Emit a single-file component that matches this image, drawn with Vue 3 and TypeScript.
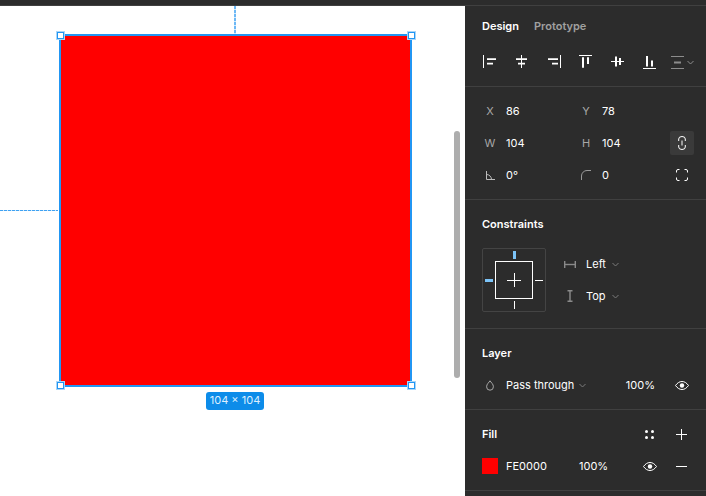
<script setup lang="ts">
// each icon is one filled path on a 14x14 box
const aligns = [
  "M0 0h1v13H0zM4 3.300h9v1.700H4zM4 7.700h6v1.700H4z",
  "M6 0h1v13H6zM1 3.300h11v1.700H1zM3 7.700h7v1.700H3z",
  "M13 0h1v13h-1zM1 3.300h10v1.700H1zM5 7.700h6v1.700H5z",
  "M0 0h13v1H0zM3 2.300h2v10.400H3zM8 2.300h2V9H8z",
  "M0 6h13v1H0zM4 1.500h2v10H4zM8 3h2v7H8z",
  "M0 13h13v1H0zM3 1h2v10.500H3zM8 5.500h2v6H8z",
];
</script>

<template>
  <div class="app">
    <div class="topbar"></div>
    <div class="main">
      <div class="canvas">
        <div class="guide guide-v"></div>
        <div class="guide guide-h"></div>
        <div class="rect"></div>
        <span class="handle tl"></span>
        <span class="handle tr"></span>
        <span class="handle bl"></span>
        <span class="handle br"></span>
        <div class="size-tag">104 × 104</div>
        <div class="scrollbar"></div>
      </div>

      <aside class="panel">
        <section class="tabs-section">
          <div class="tabs">
            <span class="tab active">Design</span>
            <span class="tab">Prototype</span>
          </div>
          <div class="align-row">
            <svg v-for="d in aligns" :key="d" class="align-icon" width="14" height="14" viewBox="0 0 14 14">
              <path :d="d" fill="#fff" />
            </svg>
            <div class="distribute">
              <svg width="14" height="13" viewBox="0 0 14 13">
                <path d="M0 .5h13M0 12.500h13" stroke="#8c8c8c" fill="none" />
                <path d="M3 5.500h7v2H3z" fill="#8c8c8c" />
              </svg>
              <svg class="chev" width="7" height="5" viewBox="0 0 7 5">
                <path d="M.5 1l3 3 3-3" stroke="#8c8c8c" fill="none" />
              </svg>
            </div>
          </div>
        </section>

        <section class="geometry">
          <div class="geo-row">
            <span class="geo-label">X</span><span class="geo-value">86</span>
            <span class="geo-label">Y</span><span class="geo-value last">78</span>
            <span class="geo-end"></span>
          </div>
          <div class="geo-row">
            <span class="geo-label">W</span><span class="geo-value">104</span>
            <span class="geo-label">H</span><span class="geo-value last">104</span>
            <span class="geo-end link-box">
              <svg width="8" height="14" viewBox="0 0 8 14">
                <path d="M.7 5V3a3.300 2.500 0 0 1 6.600 0v2M.7 9v2a3.300 2.500 0 0 0 6.600 0V9M4 4.500v5" stroke="#fff" fill="none" />
              </svg>
            </span>
          </div>
          <div class="geo-row">
            <span class="geo-label">
              <svg width="9" height="9" viewBox="0 0 9 9">
                <path d="M.5 0v8.500H9M.5 3.500a5 5 0 0 1 5 5" stroke="#bdbdbd" fill="none" />
              </svg>
            </span>
            <span class="geo-value">0°</span>
            <span class="geo-label">
              <svg width="10" height="10" viewBox="0 0 10 10">
                <path d="M.5 10V6A5.500 5.500 0 0 1 6 .5h4" stroke="#9a9a9a" fill="none" />
              </svg>
            </span>
            <span class="geo-value last">0</span>
            <span class="geo-end">
              <svg width="12" height="12" viewBox="0 0 12 12">
                <path d="M.5 3.500V2A1.500 1.500 0 0 1 2 .5h1.500M8.500.5H10A1.500 1.500 0 0 1 11.500 2v1.500M11.500 8.500V10A1.500 1.500 0 0 1 10 11.500H8.500M3.500 11.500H2A1.500 1.500 0 0 1 .5 10V8.500" stroke="#fff" fill="none" />
              </svg>
            </span>
          </div>
        </section>

        <section class="constraints">
          <h3 class="title">Constraints</h3>
          <div class="constraint-body">
            <div class="cbox">
              <div class="cinner">
                <svg width="14" height="14" viewBox="0 0 14 14">
                  <path d="M7.500 0v14M0 7.500h14" stroke="#fff" fill="none" />
                </svg>
              </div>
              <i class="tick t"></i>
              <i class="tick l"></i>
              <i class="tick r"></i>
              <i class="tick b"></i>
            </div>
            <div class="constraint-rows">
              <div class="c-row">
                <svg class="c-icon" width="12" height="7" viewBox="0 0 12 7">
                  <path d="M.7 0v7M11.300 0v7" stroke="#8a8a8a" stroke-width="1.400" fill="none" />
                  <path d="M1 3.500h10" stroke="#8a8a8a" stroke-width="1.400" fill="none" />
                </svg>
                <span class="c-text">Left</span>
                <svg width="7" height="5" viewBox="0 0 7 5"><path d="M.5 1l3 3 3-3" stroke="#7a7a7a" fill="none" /></svg>
              </div>
              <div class="c-row">
                <svg class="c-icon" width="12" height="12" viewBox="0 0 12 12">
                  <path d="M3.500.7h5M3.500 11.300h5M6 1v10" stroke="#8a8a8a" stroke-width="1.400" fill="none" />
                </svg>
                <span class="c-text">Top</span>
                <svg width="7" height="5" viewBox="0 0 7 5"><path d="M.5 1l3 3 3-3" stroke="#7a7a7a" fill="none" /></svg>
              </div>
            </div>
          </div>
        </section>

        <section class="layer">
          <h3 class="title">Layer</h3>
          <div class="layer-row">
            <svg class="drop" width="8" height="11" viewBox="0 0 8 11">
              <path d="M4 .8C3 2.500.6 4 .6 6.800a3.400 3.400 0 0 0 6.800 0C7.400 4 5 2.500 4 .8z" stroke="#a8a8a8" fill="none" />
            </svg>
            <span class="blend">Pass through</span>
            <svg width="7" height="5" viewBox="0 0 7 5"><path d="M.5 1l3 3 3-3" stroke="#7a7a7a" fill="none" /></svg>
            <span class="opacity">100%</span>
            <svg width="14" height="9" viewBox="0 0 14 9">
              <path d="M.5 4.500C2.500 1.800 4.500.5 7 .5s4.500 1.300 6.500 4c-2 2.700-4 4-6.500 4s-4.500-1.300-6.500-4z" stroke="#fff" fill="none" />
              <circle cx="7" cy="4.500" r="2.200" fill="#fff" />
            </svg>
          </div>
        </section>

        <section class="fill">
          <div class="fill-head">
            <h3 class="title">Fill</h3>
            <svg class="dots" width="9" height="9" viewBox="0 0 9 9" fill="#fff">
              <circle cx="1.500" cy="1.500" r="1.500" /><circle cx="7.500" cy="1.500" r="1.500" />
              <circle cx="1.500" cy="7.500" r="1.500" /><circle cx="7.500" cy="7.500" r="1.500" />
            </svg>
            <svg width="11" height="11" viewBox="0 0 11 11"><path d="M5.500 0v11M0 5.500h11" stroke="#fff" fill="none" /></svg>
          </div>
          <div class="fill-row">
            <span class="swatch"></span>
            <span class="hex">FE0000</span>
            <span class="fill-op">100%</span>
            <svg class="fill-eye" width="14" height="9" viewBox="0 0 14 9">
              <path d="M.5 4.500C2.500 1.800 4.500.5 7 .5s4.500 1.300 6.500 4c-2 2.700-4 4-6.500 4s-4.500-1.300-6.500-4z" stroke="#fff" fill="none" />
              <circle cx="7" cy="4.500" r="2.200" fill="#fff" />
            </svg>
            <svg width="11" height="1" viewBox="0 0 11 1"><path d="M0 .5h11" stroke="#fff" fill="none" /></svg>
          </div>
        </section>
      </aside>
    </div>
  </div>
</template>

<style>
html,
body {
  margin: 0;
  overflow: hidden;
}
</style>

<style scoped>
.app {
  width: 706px;
  height: 496px;
  display: flex;
  flex-direction: column;
  font-family: Inter, "Liberation Sans", sans-serif;
  font-size: 11px;
  color: #fff;
  background: #2c2c2c;
  overflow: hidden;
}

.topbar {
  height: 5px;
  flex: none;
  background: #2c2c2c;
  border-bottom: 1px solid #404040;
}

.main {
  flex: 1;
  display: flex;
  min-height: 0;
}

.canvas {
  position: relative;
  width: 465px;
  flex: none;
  background: #fff;
}

.rect {
  position: absolute;
  left: 59px;
  top: 28px;
  width: 349px;
  height: 349px;
  background: #ff0000;
  border: 2px solid #2196f3;
}

.handle {
  position: absolute;
  width: 5px;
  height: 5px;
  background: #fff;
  border: 1px solid #2196f3;
  outline: 1px solid #a9d5f8;
}
.tl { left: 57px; top: 26px; }
.tr { left: 408px; top: 26px; }
.bl { left: 57px; top: 376px; }
.br { left: 408px; top: 376px; }

.guide {
  position: absolute;
}
.guide-v {
  left: 234px;
  top: 0;
  width: 2px;
  height: 28px;
  background: repeating-linear-gradient(to bottom, #6db8f5 0 3px, #d4ebfd 3px 4px);
}
.guide-h {
  left: 0;
  top: 204px;
  width: 58px;
  height: 1px;
  background: repeating-linear-gradient(to right, #3fa2f2 0 3px, #cfe8fc 3px 4px);
}

.size-tag {
  position: absolute;
  left: 206px;
  top: 386px;
  width: 58px;
  height: 18px;
  line-height: 17px;
  border-radius: 3px;
  background: #0d8ce9;
  color: #dcefff;
  font-size: 11px;
  text-align: center;
  white-space: nowrap;
}

.scrollbar {
  position: absolute;
  left: 454px;
  top: 125px;
  width: 6px;
  height: 247px;
  border-radius: 3px;
  background: #adadad;
}

.panel {
  flex: 1;
  display: flex;
  flex-direction: column;
  min-width: 0;
}

.panel > section {
  box-sizing: border-box;
  border-bottom: 1px solid #404040;
  flex: none;
}

.tabs-section {
  height: 81px;
  padding: 13px 17px 0;
}

.tabs {
  display: flex;
  gap: 15px;
  font-weight: 600;
  line-height: 14px;
}

.tab {
  color: #a0a0a0;
}
.tab.active {
  color: #fff;
}

.align-row {
  display: flex;
  align-items: center;
  margin-top: 22px;
  padding-left: 1px;
  gap: 18px;
}

.align-icon {
  flex: none;
}

.distribute {
  display: flex;
  align-items: center;
  gap: 2px;
  margin-left: -4px;
}

.geometry {
  height: 113px;
  padding: 8px 12px 0 17px;
}

.geo-row {
  height: 32px;
  display: flex;
  align-items: center;
}

.geo-label {
  width: 16px;
  margin-right: 8px;
  flex: none;
  color: #a8a8a8;
  display: flex;
  justify-content: center;
}

.geo-value {
  width: 72px;
  flex: none;
}

.geo-value.last {
  width: auto;
}

.geo-end {
  width: 24px;
  height: 24px;
  margin-left: auto;
  display: flex;
  align-items: center;
  justify-content: center;
  flex: none;
}

.link-box {
  background: #3a3a3a;
  border-radius: 2px;
}

.title {
  margin: 0;
  font-size: 11px;
  font-weight: 600;
  line-height: 14px;
}

.constraints {
  height: 129px;
  padding: 17px 17px 0;
}

.constraint-body {
  display: flex;
  align-items: flex-start;
  margin-top: 17px;
  gap: 18px;
}

.cbox {
  position: relative;
  box-sizing: border-box;
  width: 64px;
  height: 64px;
  border: 1px solid #444;
  border-radius: 2px;
  flex: none;
  display: flex;
  align-items: center;
  justify-content: center;
}

.cinner {
  box-sizing: border-box;
  width: 38px;
  height: 38px;
  border: 1px solid #fff;
  display: flex;
  align-items: center;
  justify-content: center;
}

.tick {
  position: absolute;
  background: #fff;
}
.tick.t { left: 30px; top: 2px; width: 3px; height: 8px; background: #7cc4f8; }
.tick.l { left: 2px; top: 30px; width: 8px; height: 3px; background: #7cc4f8; }
.tick.r { right: 2px; top: 31px; width: 8px; height: 1px; }
.tick.b { left: 31px; bottom: 2px; width: 1px; height: 8px; }

.constraint-rows {
  display: flex;
  flex-direction: column;
  gap: 8px;
  margin-top: 4px;
}

.c-row {
  height: 24px;
  display: flex;
  align-items: center;
}

.c-icon {
  width: 12px;
  margin-right: 10px;
  flex: none;
}

.c-text {
  margin-right: 6px;
}

.layer {
  height: 81px;
  padding: 17px 17px 0;
}

.layer-row {
  display: flex;
  align-items: center;
  height: 16px;
  margin-top: 17px;
}

.drop {
  margin: 0 12px 0 4px;
  flex: none;
}

.blend {
  margin-right: 5px;
}

.opacity {
  margin-left: auto;
  margin-right: 20px;
}

.fill {
  height: 81px;
  padding: 17px 19px 0 17px;
}

.fill-head {
  display: flex;
  align-items: center;
  height: 14px;
}

.fill-head .title {
  margin-right: auto;
}

.dots {
  margin-right: 22px;
}

.fill-row {
  display: flex;
  align-items: center;
  height: 16px;
  margin-top: 17px;
}

.swatch {
  width: 16px;
  height: 16px;
  background: #ff0000;
  margin-right: 8px;
  flex: none;
}

.hex {
  width: 73px;
  flex: none;
}

.fill-op {
  width: 64px;
  flex: none;
}

.fill-eye {
  margin-right: 19px;
  flex: none;
}
</style>
